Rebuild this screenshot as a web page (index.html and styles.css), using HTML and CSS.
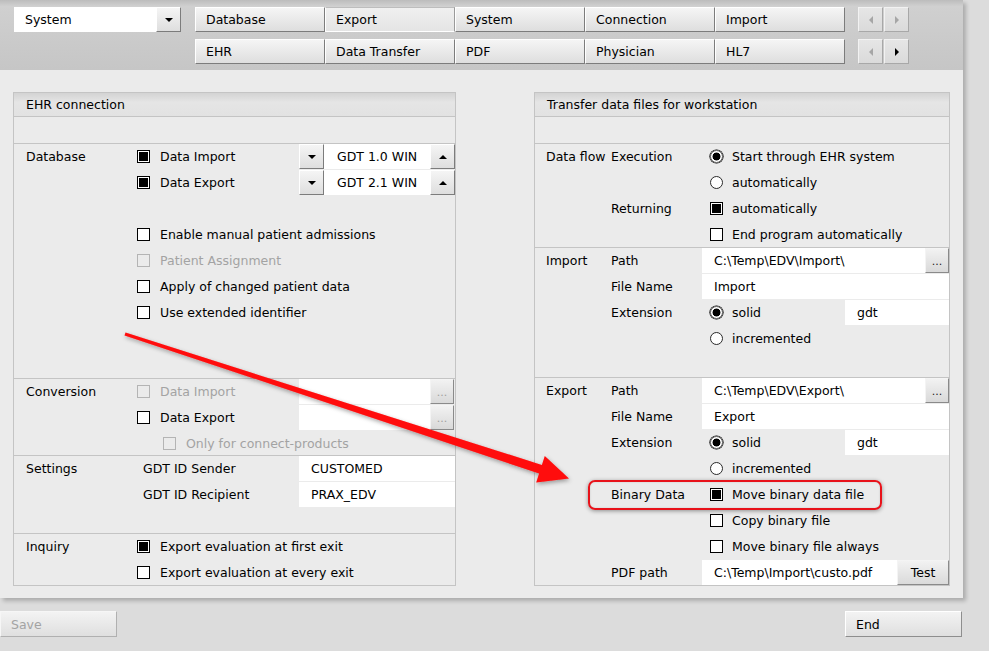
FILE: index.html
```html
<!DOCTYPE html>
<html>
<head>
<meta charset="utf-8">
<link rel="stylesheet" href="styles.css">
</head>
<body>
<div class="page">
  <div class="window">
    <div class="toolbar">
      <div class="combo">
        <div class="combo-field">System</div>
        <div class="btn combo-btn"><span class="tri-down"></span></div>
      </div>
      <div class="tabs">
        <div class="tab-row">
          <div class="btn tab">Database</div>
          <div class="btn tab active">Export</div>
          <div class="btn tab">System</div>
          <div class="btn tab">Connection</div>
          <div class="btn tab">Import</div>
          <div class="scroll">
            <div class="sbtn"><span class="tri-left dis"></span></div>
            <div class="sbtn"><span class="tri-right dis"></span></div>
          </div>
        </div>
        <div class="tab-row">
          <div class="btn tab">EHR</div>
          <div class="btn tab">Data Transfer</div>
          <div class="btn tab">PDF</div>
          <div class="btn tab">Physician</div>
          <div class="btn tab">HL7</div>
          <div class="scroll">
            <div class="sbtn"><span class="tri-left dis"></span></div>
            <div class="sbtn"><span class="tri-right"></span></div>
          </div>
        </div>
      </div>
    </div>

    <div class="content">
      <!-- LEFT GROUP -->
      <div class="group left">
        <div class="group-head">EHR connection</div>
        <div class="blank"></div>

        <div class="sec l-sec sec-db">
          <div class="row">
            <div class="lab">Database</div>
            <div class="chk"><span class="cb on"></span>Data Import</div>
            <div class="ctl spin">
              <div class="btn sp-btn"><span class="tri-down"></span></div>
              <div class="field sp-field">GDT 1.0 WIN</div>
              <div class="btn sp-btn"><span class="tri-up"></span></div>
            </div>
          </div>
          <div class="row">
            <div class="lab"></div>
            <div class="chk"><span class="cb on"></span>Data Export</div>
            <div class="ctl spin">
              <div class="btn sp-btn"><span class="tri-down"></span></div>
              <div class="field sp-field">GDT 2.1 WIN</div>
              <div class="btn sp-btn"><span class="tri-up"></span></div>
            </div>
          </div>
          <div class="row"></div>
          <div class="row">
            <div class="lab"></div>
            <div class="chk wide"><span class="cb"></span>Enable manual patient admissions</div>
          </div>
          <div class="row">
            <div class="lab"></div>
            <div class="chk wide dis"><span class="cb dis"></span>Patient Assignment</div>
          </div>
          <div class="row">
            <div class="lab"></div>
            <div class="chk wide"><span class="cb"></span>Apply of changed patient data</div>
          </div>
          <div class="row">
            <div class="lab"></div>
            <div class="chk wide"><span class="cb"></span>Use extended identifier</div>
          </div>
        </div>

        <div class="sec l-sec sec-conv">
          <div class="row">
            <div class="lab">Conversion</div>
            <div class="chk dis"><span class="cb dis"></span>Data Import</div>
            <div class="ctl browse">
              <div class="field br-field"></div>
              <div class="btn dots dis">...</div>
            </div>
          </div>
          <div class="row">
            <div class="lab"></div>
            <div class="chk"><span class="cb"></span>Data Export</div>
            <div class="ctl browse">
              <div class="field br-field"></div>
              <div class="btn dots dis">...</div>
            </div>
          </div>
          <div class="row">
            <div class="lab"></div>
            <div class="chk wide indent dis"><span class="cb dis"></span>Only for connect-products</div>
          </div>
        </div>

        <div class="sec l-sec sec-set">
          <div class="row">
            <div class="lab">Settings</div>
            <div class="chk text">GDT ID Sender</div>
            <div class="ctl field">CUSTOMED</div>
          </div>
          <div class="row">
            <div class="lab"></div>
            <div class="chk text">GDT ID Recipient</div>
            <div class="ctl field">PRAX_EDV</div>
          </div>
        </div>

        <div class="sec l-sec sec-inq">
          <div class="row">
            <div class="lab">Inquiry</div>
            <div class="chk wide"><span class="cb on"></span>Export evaluation at first exit</div>
          </div>
          <div class="row">
            <div class="lab"></div>
            <div class="chk wide"><span class="cb"></span>Export evaluation at every exit</div>
          </div>
        </div>
      </div>

      <!-- RIGHT GROUP -->
      <div class="group right">
        <div class="group-head">Transfer data files for workstation</div>
        <div class="blank"></div>

        <div class="sec r-sec sec-flow">
          <div class="row">
            <div class="c1">Data flow</div>
            <div class="c2">Execution</div>
            <div class="c3"><span class="rb on"></span>Start through EHR system</div>
          </div>
          <div class="row">
            <div class="c1"></div><div class="c2"></div>
            <div class="c3"><span class="rb"></span>automatically</div>
          </div>
          <div class="row">
            <div class="c1"></div>
            <div class="c2">Returning</div>
            <div class="c3"><span class="cb on"></span>automatically</div>
          </div>
          <div class="row">
            <div class="c1"></div><div class="c2"></div>
            <div class="c3"><span class="cb"></span>End program automatically</div>
          </div>
        </div>

        <div class="sec r-sec sec-imp">
          <div class="row">
            <div class="c1">Import</div>
            <div class="c2">Path</div>
            <div class="c3f browse">
              <div class="field path-field">C:\Temp\EDV\Import\</div>
              <div class="btn dots">...</div>
            </div>
          </div>
          <div class="row">
            <div class="c1"></div>
            <div class="c2">File Name</div>
            <div class="c3f field">Import</div>
          </div>
          <div class="row">
            <div class="c1"></div>
            <div class="c2">Extension</div>
            <div class="c3f ext">
              <div class="ext-opt"><span class="rb on"></span>solid</div>
              <div class="field ext-field">gdt</div>
            </div>
          </div>
          <div class="row">
            <div class="c1"></div><div class="c2"></div>
            <div class="c3"><span class="rb"></span>incremented</div>
          </div>
        </div>

        <div class="sec r-sec sec-exp">
          <div class="row">
            <div class="c1">Export</div>
            <div class="c2">Path</div>
            <div class="c3f browse">
              <div class="field path-field">C:\Temp\EDV\Export\</div>
              <div class="btn dots">...</div>
            </div>
          </div>
          <div class="row">
            <div class="c1"></div>
            <div class="c2">File Name</div>
            <div class="c3f field">Export</div>
          </div>
          <div class="row">
            <div class="c1"></div>
            <div class="c2">Extension</div>
            <div class="c3f ext">
              <div class="ext-opt"><span class="rb on"></span>solid</div>
              <div class="field ext-field">gdt</div>
            </div>
          </div>
          <div class="row">
            <div class="c1"></div><div class="c2"></div>
            <div class="c3"><span class="rb"></span>incremented</div>
          </div>
          <div class="row">
            <div class="c1"></div>
            <div class="c2">Binary Data</div>
            <div class="c3"><span class="cb on"></span>Move binary data file</div>
          </div>
          <div class="row">
            <div class="c1"></div><div class="c2"></div>
            <div class="c3"><span class="cb"></span>Copy binary file</div>
          </div>
          <div class="row">
            <div class="c1"></div><div class="c2"></div>
            <div class="c3"><span class="cb"></span>Move binary file always</div>
          </div>
          <div class="row">
            <div class="c1"></div>
            <div class="c2">PDF path</div>
            <div class="c3f browse">
              <div class="field pdf-field">C:\Temp\Import\custo.pdf</div>
              <div class="btn test">Test</div>
            </div>
          </div>
        </div>
      </div>
    </div>
  </div>

  <div class="footer">
    <div class="btn foot-btn dis">Save</div>
    <div class="btn foot-btn">End</div>
  </div>

  <div class="highlight"></div>
  <svg class="arrow" width="989" height="651" viewBox="0 0 989 651">
    <defs>
      <filter id="sh" x="-10%" y="-10%" width="120%" height="130%">
        <feDropShadow dx="1" dy="2" stdDeviation="2" flood-color="#000" flood-opacity="0.35"/>
      </filter>
    </defs>
    <polygon filter="url(#sh)" fill="#ff0a0a" points="125.5,332.6 541.9,464.9 544.8,455.9 569,478.5 536.2,482.5 539.1,473.5 124.5,335.4"/>
  </svg>
</div>
</body>
</html>
```

FILE: styles.css
```css
* { box-sizing: border-box; }

body {
  margin: 0;
  background: #dcdcdc;
  font-family: "DejaVu Sans", Verdana, sans-serif;
  font-size: 12.5px;
  color: #000;
}

.page {
  position: relative;
  width: 989px;
  height: 651px;
  overflow: hidden;
}

.window {
  width: 963px;
  box-shadow: 3px 3px 4px rgba(0, 0, 0, 0.22);
}

/* ---------- toolbar ---------- */
.toolbar {
  height: 70px;
  display: flex;
  align-items: flex-start;
  gap: 14px;
  padding: 7px 0 0 14px;
  background: linear-gradient(#bcbcbc, #d0d0d0 9%, #cacaca 60%, #c6c6c6);
}

.btn {
  display: flex;
  align-items: center;
  justify-content: center;
  background: linear-gradient(#f5f5f5, #dedede);
  border: 1px solid;
  border-color: #ffffff #7c7c7c #7c7c7c #ffffff;
  white-space: nowrap;
}

.combo {
  display: flex;
  width: 167px;
  height: 25px;
}
.combo-field {
  width: 142px;
  background: #fff;
  display: flex;
  align-items: center;
  padding-left: 11px;
}
.combo-btn { width: 25px; }

.tabs {
  display: flex;
  flex-direction: column;
  gap: 7px;
}
.tab-row {
  display: flex;
  height: 25px;
}
.tab {
  width: 130px;
  justify-content: flex-start;
  padding-left: 10px;
}
.tab.active {
  background: linear-gradient(#f0f0f0, #e4e4e4);
  border-color: #bdbdbd #9a9a9a #ffffff #ffffff;
}

.scroll {
  display: flex;
  gap: 1px;
  margin-left: 13px;
}
.sbtn {
  width: 25px;
  height: 25px;
  display: flex;
  align-items: center;
  justify-content: center;
  background: linear-gradient(#e6e6e6, #dadada);
  border: 1px solid;
  border-color: #f2f2f2 #a8a8a8 #a8a8a8 #f2f2f2;
}

.tri-down, .tri-up, .tri-left, .tri-right {
  display: block;
  width: 0;
  height: 0;
}
.tri-down {
  border-left: 4px solid transparent;
  border-right: 4px solid transparent;
  border-top: 4px solid #000;
}
.tri-up {
  border-left: 4px solid transparent;
  border-right: 4px solid transparent;
  border-bottom: 4px solid #000;
}
.tri-left {
  border-top: 4px solid transparent;
  border-bottom: 4px solid transparent;
  border-right: 4px solid #000;
}
.tri-right {
  border-top: 4px solid transparent;
  border-bottom: 4px solid transparent;
  border-left: 4px solid #000;
}
.tri-left.dis { border-right-color: #a6a6a6; }
.tri-right.dis { border-left-color: #a6a6a6; }

/* ---------- content ---------- */
.content {
  height: 528px;
  background: #ebebeb;
  display: flex;
  align-items: flex-start;
  padding: 22px 0 0 13px;
}

.group {
  border: 1px solid #c4c4c4;
  background: #ebebeb;
}
.group.left { width: 443px; }
.group.right { width: 416px; margin-left: 78px; }

.group-head {
  height: 24px;
  border-bottom: 1px solid #c4c4c4;
  background: linear-gradient(#d3d3d3, #e5e5e5 40%, #e2e2e2);
  display: flex;
  align-items: center;
  padding-left: 12px;
}

.blank { height: 26px; }

.sec { border-top: 1px solid #c4c4c4; }
.sec-db { height: 235px; }
.sec-conv { height: 77px; }
.sec-set { height: 78px; }
.sec-inq { height: 52px; }
.sec-flow { height: 104px; }
.sec-imp { height: 130px; }
.sec-exp { height: 208px; }

.l-sec { padding-left: 12px; }
.r-sec { padding-left: 11px; }

.row {
  display: flex;
  align-items: center;
  height: 26px;
  padding-bottom: 2px;
  white-space: nowrap;
}

.lab { width: 111px; flex: none; }
.chk {
  width: 162px;
  flex: none;
  display: flex;
  align-items: center;
}
.chk.wide { width: auto; }
.chk.indent { padding-left: 26px; }
.chk.text { padding-left: 6px; }
.dis { color: #a3a3a3; }

.ctl {
  width: 156px;
  height: 25px;
  flex: none;
  align-self: flex-start;
  display: flex;
}

.c1 { width: 65px; flex: none; }
.c2 { width: 91px; flex: none; }
.c3 {
  display: flex;
  align-items: center;
  padding-left: 8px;
}
.c3f {
  width: 247px;
  height: 25px;
  flex: none;
  align-self: flex-start;
  display: flex;
}

/* checkbox / radio */
.cb {
  width: 13px;
  height: 13px;
  flex: none;
  border: 1px solid #000;
  background: #fff;
  margin-right: 10px;
}
.c3 .cb, .c3 .rb, .ext-opt .rb { margin-right: 9px; }
.cb.on {
  background: #000;
  box-shadow: inset 0 0 0 1px #fff;
}
.cb.dis {
  border-color: #b4b4b4;
  background: transparent;
}
.rb {
  width: 13px;
  height: 13px;
  flex: none;
  border-radius: 50%;
  border: 1px solid #2a2a2a;
  background: #fff;
}
.rb.on {
  border-color: #555;
  background: radial-gradient(circle, #000 0 3.6px, #fff 4.3px);
  box-shadow: 0 0 0 0.6px #000;
}

/* fields */
.field {
  background: #fff;
  height: 25px;
  display: flex;
  align-items: center;
  padding-left: 12px;
  padding-bottom: 1px;
  white-space: nowrap;
  overflow: hidden;
}
.spin .sp-btn { width: 25px; flex: none; }
.spin .sp-field { width: 106px; padding-left: 13px; }
.browse .br-field { width: 131px; }
.path-field { width: 223px; }
.pdf-field { width: 195px; }

.dots {
  width: 24px;
  flex: none;
  align-items: flex-end;
  padding-bottom: 6px;
  font-size: 11px;
  line-height: 8px;
  color: #222;
  background: linear-gradient(#f2f2f2, #d9d9d9);
  border-color: #f4f4f4 #8a8a8a #8a8a8a #f4f4f4;
}
.dots.dis { color: #a0a0a0; }

.test {
  width: 52px;
  flex: none;
  background: linear-gradient(#f2f2f2, #dadada);
  border-color: #f4f4f4 #8a8a8a #8a8a8a #f4f4f4;
}

.ext { align-items: stretch; }
.ext-opt {
  width: 143px;
  display: flex;
  align-items: center;
  padding-left: 8px;
  padding-bottom: 1px;
}
.ext-field { width: 104px; }

/* footer */
.footer {
  width: 962px;
  display: flex;
  justify-content: space-between;
  padding-top: 13px;
}
.foot-btn {
  width: 117px;
  height: 26px;
  justify-content: flex-start;
  padding-left: 10px;
  background: linear-gradient(#f3f3f3, #dfdfdf);
  border-color: #ffffff #8e8e8e #8e8e8e #ffffff;
}
.foot-btn.dis { color: #a3a3a3; border-color: #f6f6f6 #b0b0b0 #b0b0b0 #f6f6f6; }

/* overlays */
.highlight {
  position: absolute;
  left: 588px;
  top: 480px;
  width: 294px;
  height: 30px;
  border: 2px solid #e8121a;
  border-radius: 7px;
  box-shadow: 0 1px 4px rgba(0, 0, 0, 0.4), inset 0 0 2px rgba(0, 0, 0, 0.15);
  pointer-events: none;
}
.arrow {
  position: absolute;
  left: 0;
  top: 0;
  pointer-events: none;
}
```
